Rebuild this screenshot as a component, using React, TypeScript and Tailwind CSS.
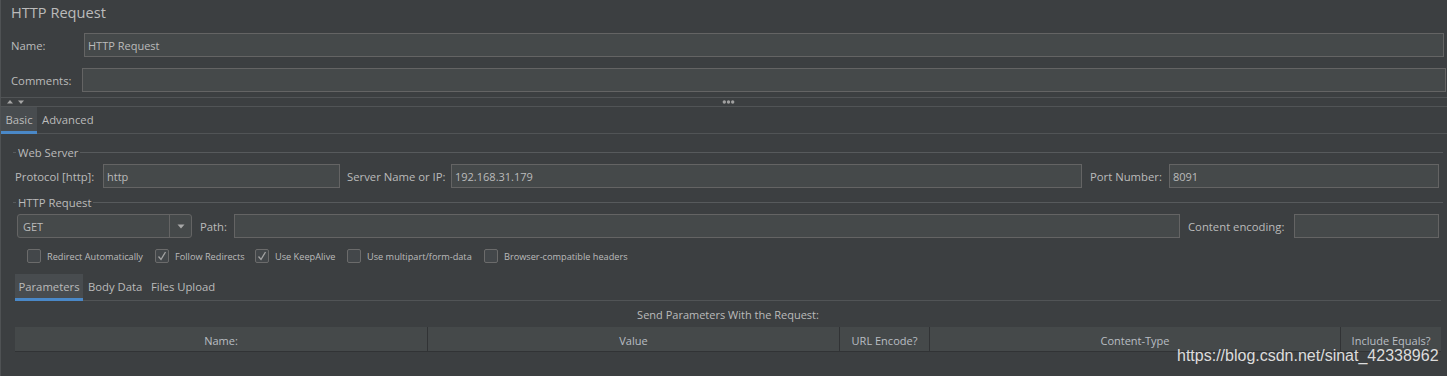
import React from "react";

function Input({ value, className = "" }: { value?: string; className?: string }) {
  return (
    <div
      className={`h-[24px] min-w-0 shrink-0 box-border bg-[#45494a] border border-[#646464] flex items-center px-[3px] pt-[2px] text-[11px] text-[#bbbbbb] whitespace-nowrap overflow-hidden ${className}`}
    >
      {value}
    </div>
  );
}

function Check({ checked, label, className = "" }: { checked?: boolean; label: string; className?: string }) {
  return (
    <div className={`flex items-center h-[14px] shrink-0 ${className}`}>
      <div className="w-[14px] h-[14px] box-border border border-[#6b6b6b] rounded-[2px] bg-[#43474a] flex items-center justify-center">
        {checked && (
          <svg width="12" height="12" viewBox="0 0 12 12">
            <path d="M2.5 6.5 L5 9.5 L9.5 2" fill="none" stroke="#a3a3a3" strokeWidth="1.3" />
          </svg>
        )}
      </div>
      <div className="ml-[6px] pt-[2px] text-[9.2px] whitespace-nowrap">{label}</div>
    </div>
  );
}

function Legend({ label }: { label: string }) {
  return (
    <div className="h-[17px] flex items-center ml-[13px] mr-[4px]">
      <div className="w-[3px] h-px bg-[#575a5c]" />
      <div className="px-[2px] pt-[2px] whitespace-nowrap">{label}</div>
      <div className="flex-1 h-px bg-[#575a5c]" />
    </div>
  );
}

export default function App() {
  return (
    <div className="w-[1447px] h-[376px] bg-[#3c3f41] relative overflow-hidden font-['Open_Sans',sans-serif] text-[#bbbbbb] text-[11.3px] shadow-[inset_1px_0_0_#4f5254]">
      {/* Title */}
      <div className="h-[24px] pl-[11px] pt-[2px] flex items-center text-[14.6px]">HTTP Request</div>

      {/* Name */}
      <div className="mt-[9px] h-[24px] flex items-center">
        <div className="w-[84px] shrink-0 pl-[11px] pt-[2px]">Name:</div>
        <Input value="HTTP Request" className="flex-1 mr-[3px]" />
      </div>

      {/* Comments */}
      <div className="mt-[11px] h-[24px] flex items-center">
        <div className="w-[82px] shrink-0 pl-[11px] pt-[2px]">Comments:</div>
        <Input className="flex-1 mr-[1px]" />
      </div>

      {/* Splitter */}
      <div className="mt-[5px] h-[10px] box-border border-y border-[#515456] flex items-center">
        <svg className="ml-[6px] shrink-0" width="20" height="8" viewBox="0 0 20 8">
          <polygon points="1,5.5 4,2 7,5.5" fill="#a6a6a6" />
          <polygon points="12,2.5 18,2.5 15,6" fill="#a6a6a6" />
        </svg>
        <svg className="ml-[695px] shrink-0" width="14" height="8" viewBox="0 0 14 8">
          <circle cx="3.3" cy="4" r="1.7" fill="#a0a0a0" />
          <circle cx="7.5" cy="4" r="1.7" fill="#a0a0a0" />
          <circle cx="11.7" cy="4" r="1.7" fill="#a0a0a0" />
        </svg>
      </div>

      {/* Tabs */}
      <div className="h-[27px] flex shadow-[inset_0_-1px_0_#515456]">
        <div className="ml-[1px] w-[36px] h-[27px] box-border bg-[#484c4f] border-b-[3px] border-[#4a88c7] pt-[2px] flex items-center justify-center">
          Basic
        </div>
        <div className="pl-[5px] pt-[2px] pb-[3px] flex items-center">Advanced</div>
      </div>

      {/* Web Server */}
      <div className="mt-[10px]">
        <Legend label="Web Server" />
      </div>
      <div className="mt-[3px] h-[24px] flex items-center pl-[15px] pr-[8px]">
        <div className="w-[88px] shrink-0 pt-[2px] whitespace-nowrap">Protocol [http]:</div>
        <Input value="http" className="w-[237px]" />
        <div className="ml-[7px] w-[104px] shrink-0 pt-[2px] whitespace-nowrap">Server Name or IP:</div>
        <Input value="192.168.31.179" className="flex-1" />
        <div className="ml-[8px] w-[79px] shrink-0 pt-[2px] whitespace-nowrap">Port Number:</div>
        <Input value="8091" className="w-[270px]" />
      </div>

      {/* HTTP Request */}
      <div className="mt-[6px]">
        <Legend label="HTTP Request" />
      </div>
      <div className="mt-[3px] h-[24px] flex items-center pl-[17px] pr-[8px]">
        <div className="w-[175px] h-[24px] shrink-0 box-border border border-[#646464] rounded-[3px] bg-[#45494a] flex">
          <div className="flex-1 flex items-center pl-[5px] pt-[2px] text-[11px]">GET</div>
          <div className="w-[22px] border-l border-[#646464] flex items-center justify-center">
            <svg width="8" height="5" viewBox="0 0 8 5">
              <polygon points="0.5,0.5 7.5,0.5 4,4.5" fill="#a8a8a8" />
            </svg>
          </div>
        </div>
        <div className="ml-[8px] w-[34px] shrink-0 pt-[2px]">Path:</div>
        <Input className="flex-1" />
        <div className="ml-[8px] w-[106px] shrink-0 pt-[2px] whitespace-nowrap">Content encoding:</div>
        <Input className="w-[145px]" />
      </div>

      {/* Checkboxes */}
      <div className="mt-[11px] h-[14px] flex pl-[27px]">
        <Check label="Redirect Automatically" className="w-[128px]" />
        <Check checked label="Follow Redirects" className="w-[100px]" />
        <Check checked label="Use KeepAlive" className="w-[92px]" />
        <Check label="Use multipart/form-data" className="w-[137px]" />
        <Check label="Browser-compatible headers" />
      </div>

      {/* Sub tabs */}
      <div className="mt-[11px] ml-[15px] w-[1426px] h-[27px] flex shadow-[inset_0_-1px_0_#515456]">
        <div className="w-[68px] h-[27px] box-border bg-[#484c4f] border-b-[3px] border-[#4a88c7] pt-[3px] flex items-center justify-center">
          Parameters
        </div>
        <div className="w-[63px] pl-[5px] pt-[3px] pb-[3px] flex items-center whitespace-nowrap">Body Data</div>
        <div className="pl-[5px] pt-[3px] pb-[3px] flex items-center whitespace-nowrap">Files Upload</div>
      </div>

      <div className="ml-[15px] w-[1426px] h-[26px] pt-[2px] flex items-center justify-center text-[11px]">
        Send Parameters With the Request:
      </div>

      {/* Table header */}
      <div className="ml-[15px] w-[1426px] h-[25px] box-border flex bg-[#45494a] border-b border-[#313335] text-[11px] text-[#b9bec3]">
        <div className="w-[413px] box-border border-r border-[#313335] flex items-center justify-center pt-[4px]">Name:</div>
        <div className="w-[412px] box-border border-r border-[#313335] flex items-center justify-center pt-[4px]">Value</div>
        <div className="w-[90px] box-border border-r border-[#313335] flex items-center justify-center pt-[4px]">URL Encode?</div>
        <div className="w-[411px] box-border border-r border-[#313335] flex items-center justify-center pt-[4px]">Content-Type</div>
        <div className="flex-1 flex items-center justify-center pt-[4px]">Include Equals?</div>
      </div>

      {/* Watermark */}
      <div className="absolute left-[1177px] top-[346px] text-[16px] leading-[20px] font-['Liberation_Sans',Arial,sans-serif] text-[#dcdcdc] whitespace-nowrap">
        https://blog.csdn.net/sinat_42338962
      </div>
    </div>
  );
}
